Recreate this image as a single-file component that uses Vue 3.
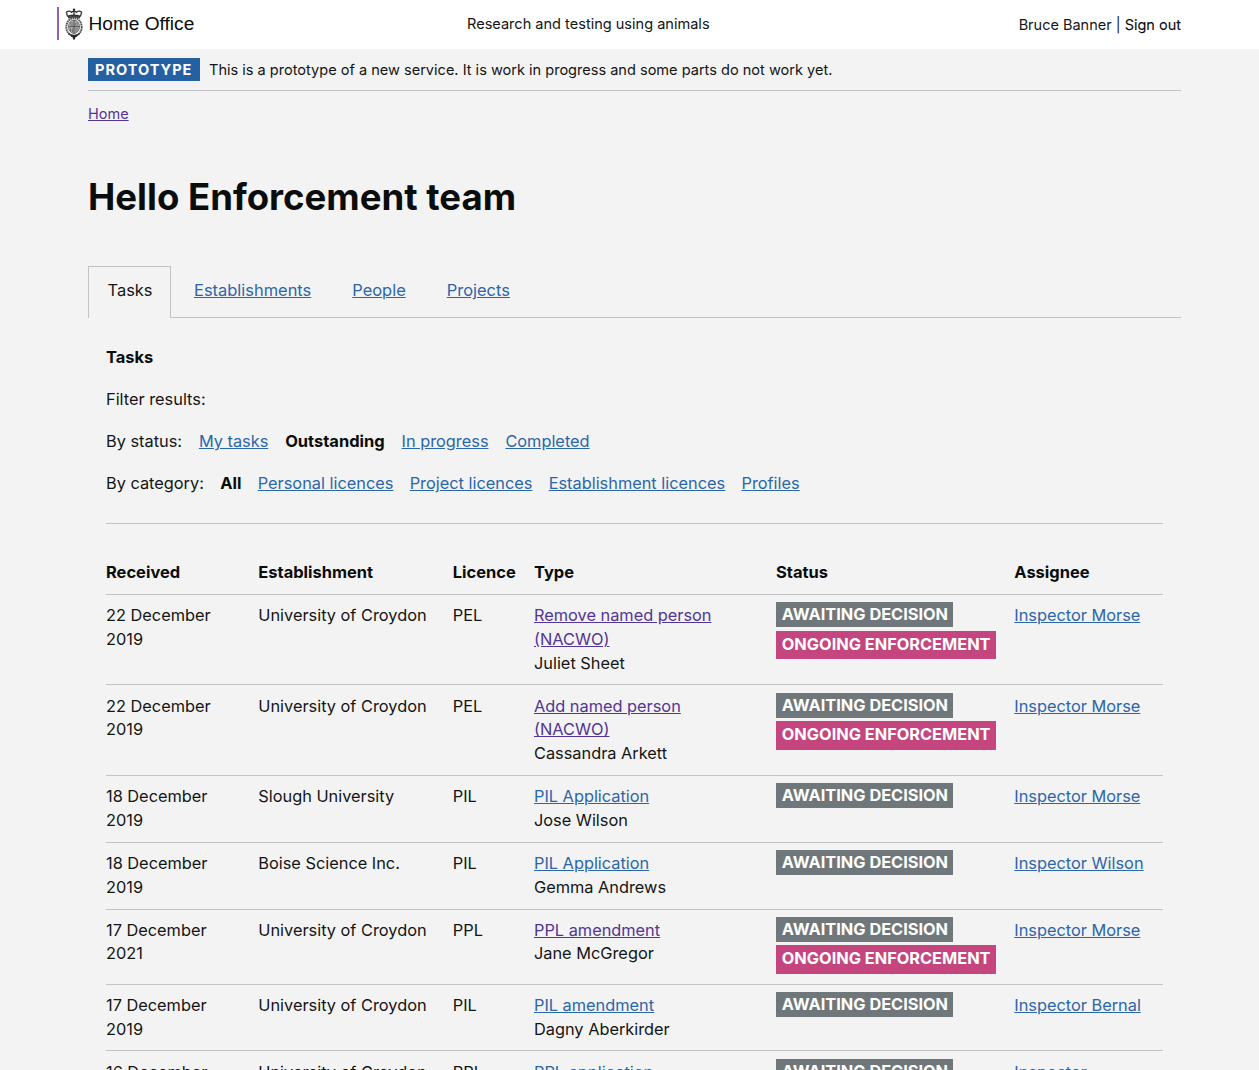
<script setup>
const tabs = ['Establishments', 'People', 'Projects']

const statusFilters = [
  { label: 'My tasks' },
  { label: 'Outstanding', active: true },
  { label: 'In progress' },
  { label: 'Completed' },
]
const categoryFilters = [
  { label: 'All', active: true },
  { label: 'Personal licences' },
  { label: 'Project licences' },
  { label: 'Establishment licences' },
  { label: 'Profiles' },
]

const columns = ['Received', 'Establishment', 'Licence', 'Type', 'Status', 'Assignee']

const tasks = [
  { received: '22 December 2019', establishment: 'University of Croydon', licence: 'PEL', type: 'Remove named person (NACWO)', visited: true, subject: 'Juliet Sheet', enforcement: true, assignee: 'Inspector Morse' },
  { received: '22 December 2019', establishment: 'University of Croydon', licence: 'PEL', type: 'Add named person (NACWO)', visited: true, subject: 'Cassandra Arkett', enforcement: true, assignee: 'Inspector Morse' },
  { received: '18 December 2019', establishment: 'Slough University', licence: 'PIL', type: 'PIL Application', subject: 'Jose Wilson', assignee: 'Inspector Morse' },
  { received: '18 December 2019', establishment: 'Boise Science Inc.', licence: 'PIL', type: 'PIL Application', subject: 'Gemma Andrews', assignee: 'Inspector Wilson' },
  { received: '17 December 2021', establishment: 'University of Croydon', licence: 'PPL', type: 'PPL amendment', visited: true, subject: 'Jane McGregor', enforcement: true, assignee: 'Inspector Morse' },
  { received: '17 December 2019', establishment: 'University of Croydon', licence: 'PIL', type: 'PIL amendment', subject: 'Dagny Aberkirder', assignee: 'Inspector Bernal' },
  { received: '16 December', establishment: 'University of Croydon', licence: 'PPL', type: 'PPL application', assignee: 'Inspector' },
]
</script>

<template>
  <div class="page">
    <header class="masthead">
      <div class="brand">
        <svg class="crest" viewBox="0 0 18 32" width="18" height="32" fill="none" stroke="#333">
          <circle cx="9" cy="1.7" r="1.2" fill="#222" stroke="none" />
          <path d="M2.6 8.6 1.4 4.2c2-1.6 4.6-1.2 5.2.6M15.4 8.6l1.2-4.4c-2-1.600-4.600-1.200-5.200.6M6.400 5c.6-2.400 4.600-2.400 5.200 0M9 2.400v5" stroke-width="1.3" />
          <path d="M2.6 7.4c4-1.200 8.800-1.200 12.800 0l-.6 3.200c-3.800-1-7.800-1-11.600 0z" fill="#333" stroke="none" />
          <path d="M4.200 9.100h9.600" stroke="#aaa" stroke-width=".6" stroke-dasharray="1.2 .9" />
          <ellipse cx="9" cy="19" rx="7.700" ry="8.900" stroke="#555" stroke-width="1.9" stroke-dasharray="1.7 .5" />
          <ellipse cx="9" cy="18.700" rx="5.500" ry="6.700" fill="#b4b4b4" stroke="#555" stroke-width=".8" />
          <path d="M9 12v13.500M3.600 18.700h10.800" stroke-width=".8" />
          <path d="M5 15h3M5.200 17h2.800M10.200 14.600v3M12 14.600v3M5.500 20.500v2.800M7.300 20.500v3.500M10.200 21h3M10.200 23h2.200" stroke-width="1" stroke="#666" />
          <path d="M3.400 25.400c2.200 2.800 9 2.800 11.200 0M6 28.200h6" stroke-width="1.5" />
          <path d="M7.300 28.200h3.400L9.900 31.500H8.100z" fill="#222" stroke="none" />
        </svg>
        <span class="brand-name">Home Office</span>
      </div>
      <div class="service">Research and testing using animals</div>
      <div class="account">Bruce Banner | <a class="signout">Sign out</a></div>
    </header>

    <main class="container">
      <div class="phase">
        <strong class="phase-tag">PROTOTYPE</strong>
        <span class="phase-text">This is a prototype of a new service. It is work in progress and some parts do not work yet.</span>
      </div>

      <nav class="breadcrumb"><a class="link visited">Home</a></nav>

      <h1>Hello Enforcement team</h1>

      <nav class="tabs">
        <span class="tab current">Tasks</span>
        <span v-for="tab in tabs" :key="tab" class="tab"><a class="link">{{ tab }}</a></span>
      </nav>

      <section class="panel">
        <h2>Tasks</h2>
        <p class="filter">Filter results:</p>
        <p class="filter by-status">
          <span>By status:</span>
          <template v-for="f in statusFilters" :key="f.label">
            <strong v-if="f.active">{{ f.label }}</strong>
            <a v-else class="link">{{ f.label }}</a>
          </template>
        </p>
        <p class="filter">
          <span>By category:</span>
          <template v-for="f in categoryFilters" :key="f.label">
            <strong v-if="f.active">{{ f.label }}</strong>
            <a v-else class="link">{{ f.label }}</a>
          </template>
        </p>

        <div class="table">
          <div class="row head">
            <div v-for="c in columns" :key="c">{{ c }}</div>
          </div>
          <div v-for="(t, i) in tasks" :key="i" class="row">
            <div class="received">{{ t.received }}</div>
            <div>{{ t.establishment }}</div>
            <div>{{ t.licence }}</div>
            <div class="type">
              <a class="link" :class="{ visited: t.visited }">{{ t.type }}</a>
              <div>{{ t.subject }}</div>
            </div>
            <div class="status">
              <span class="tag">AWAITING DECISION</span>
              <span v-if="t.enforcement" class="tag enforcement">ONGOING ENFORCEMENT</span>
            </div>
            <div><a class="link">{{ t.assignee }}</a></div>
          </div>
        </div>
      </section>
    </main>
  </div>
</template>

<style>
html,
body {
  background: #f3f3f3;
  overflow: hidden;
}
</style>

<style scoped>
.page {
  height: 1070px;
  overflow: hidden;
  background: #f3f3f3;
  color: #141516;
  font-family: Inter, "Liberation Sans", sans-serif;
  font-optical-sizing: none;
  font-size: 16.34px;
  line-height: 23.75px;
}
.masthead {
  display: grid;
  grid-template-columns: 410px 1fr auto;
  align-items: center;
  box-sizing: border-box;
  height: 49px;
  padding: 0 78px 2px 57px;
  background: #fff;
  font-size: 14.55px;
}
.brand {
  display: flex;
  align-items: center;
  height: 33px;
  padding-left: 6px;
  border-left: 2px solid #9160b3;
}
.brand-name {
  margin-left: 5.5px;
  color: #0b0c0c;
  font: 19.1px/24px "Liberation Sans", sans-serif;
}
.service,
.account {
  padding-top: 3px;
}
.account {
  font-size: 14.5px;
}
.signout {
  color: #0b0c0c;
  -webkit-text-stroke: 0.1px #0b0c0c;
}
.container {
  padding: 0 78px 0 88px;
}
.phase {
  display: flex;
  align-items: center;
  gap: 9.5px;
  height: 41px;
  border-bottom: 1px solid #c2c3c4;
  font-size: 14.55px;
}
.phase-tag {
  width: 104.5px;
  height: 23px;
  margin-top: -1px;
  padding-left: 7px;
  background: #2560a3;
  color: #fff;
  letter-spacing: 1px;
  line-height: 24px;
}
.phase-text {
  padding-top: 2px;
}
.breadcrumb {
  margin-top: 11px;
  font-size: 14.5px;
  line-height: 24px;
}
h1 {
  margin: 46px 0 44px;
  color: #0b0c0c;
  font-size: 36.55px;
  font-weight: 700;
  line-height: 50px;
}
.link {
  color: #2b66a9;
  text-decoration: underline;
}
.link.visited {
  color: #523596;
}
.tabs {
  display: flex;
  height: 51px;
  border-bottom: 1px solid #c2c3c4;
  font-size: 16.44px;
  line-height: 49.5px;
}
.tab {
  margin-right: 41px;
}
.tab.current {
  box-sizing: border-box;
  width: 83px;
  height: 52px;
  margin-right: 23px;
  padding-left: 18.5px;
  border: 1px solid #c2c3c4;
  border-bottom: 0;
  background: #f3f3f3;
  line-height: 47.5px;
}
.panel {
  padding: 27.7px 18px 0;
}
h2,
.filter {
  margin: 0 0 18.4px;
}
h2,
.filter strong,
.row.head {
  color: #0b0c0c;
  font-size: 16.48px;
  font-weight: 700;
}
.filter {
  display: flex;
  gap: 16.3px;
}
.filter.by-status {
  gap: 16.9px;
}
.table {
  margin-top: 27.2px;
  padding-top: 27.8px;
  border-top: 1px solid #c2c3c4;
}
.row {
  display: grid;
  grid-template-columns: 152.3px 194.5px 81.2px 242px 238.3px 1fr;
  padding: 9.2px 0 9.1px;
  border-bottom: 1px solid #c2c3c4;
}
.received {
  width: 120px;
}
.type {
  width: 200px;
}
.status {
  display: flex;
  flex-direction: column;
  align-items: flex-start;
  gap: 3.3px;
  margin-top: -1.8px;
  padding-bottom: 0.6px;
}
.tag {
  padding: 0 5.4px 0 5.8px;
  background: #6f777b;
  color: #fff;
  font-weight: 700;
  line-height: 25px;
  white-space: nowrap;
}
.tag.enforcement {
  padding-right: 5px;
  padding-bottom: 2.7px;
  background: #c5467f;
  line-height: 26px;
}
</style>
